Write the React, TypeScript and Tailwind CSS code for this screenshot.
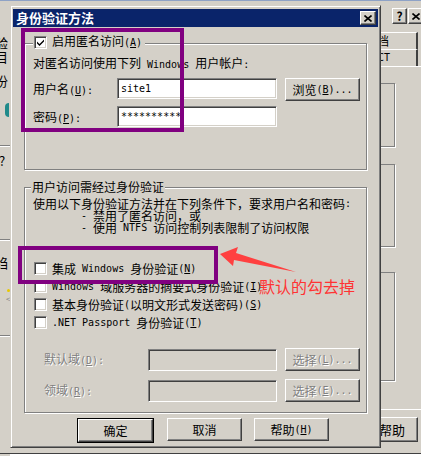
import React from "react";

type Kids = { children?: React.ReactNode };

// SimSun-like latin: half width mono
function Lat({children}: Kids) {
    return <span className="whitespace-pre font-['DejaVu_Sans_Mono',monospace] text-[10px]">{children}</span>
}

function Key({k, tail = ""}: { k: string, tail?: string }) {
    return <Lat>(<span className="underline">{k}</span>){tail}</Lat>
}

function CheckBox({checked}: { checked?: boolean }) {
    return (
        <span className="flex h-[13px] w-[13px] shrink-0 items-center justify-center border border-t-[#808080] border-l-[#808080] border-r-white border-b-white bg-white shadow-[inset_1px_1px_0_#404040,inset_-1px_-1px_0_#d4d0c8]">
            {checked && (
                <svg width="7" height="7" viewBox="0 0 7 7">
                    <polygon points="0,2.5 2.5,5 7,0.5 7,2.5 2.5,7 0,4.5" fill="#000"/>
                </svg>
            )}
        </span>
    )
}

function Field({w, h = 21, disabled, children}: Kids & { w: number, h?: number, disabled?: boolean }) {
    return (
        <div style={{width: w, height: h}}
             className={"flex shrink-0 items-center border border-t-[#808080] border-l-[#808080] border-r-white border-b-white px-[3px] shadow-[inset_1px_1px_0_#404040,inset_-1px_-1px_0_#d4d0c8] " + (disabled ? "bg-[#d4d0c8]" : "bg-white")}>
            {children}
        </div>
    )
}

function Btn({w, h = 23, disabled, children}: Kids & { w: number, h?: number, disabled?: boolean }) {
    return (
        <div style={{width: w, height: h}}
             className={"flex shrink-0 items-center justify-center border border-t-white border-l-white border-r-[#404040] border-b-[#404040] bg-[#d4d0c8] shadow-[inset_-1px_-1px_0_#808080] " + (disabled ? "text-[#808080] [text-shadow:1px_1px_0_#fff]" : "")}>
            {children}
        </div>
    )
}

function CloseGlyph() {
    return (
        <svg width="8" height="7" viewBox="0 0 8 7">
            <path d="M0.5 0.5 L7.5 6.5 M7.5 0.5 L0.5 6.5" stroke="#000" strokeWidth="1.6"/>
        </svg>
    )
}

function BackWindow() {
    return (
        <div className="absolute inset-0">
            <div className="h-[1px] bg-[#8ea2c6]"/>
            <div className="flex h-[26px] items-start justify-end bg-[#d4d0c8] pt-[7px]">
                <div className="mr-[1px]"><Btn w={15} h={16}><span className="font-bold text-[12px] leading-none">?</span></Btn></div>
                <div className="mr-[-3px]"><Btn w={16} h={16}><CloseGlyph/></Btn></div>
            </div>
            {/* left side of the window behind */}
            <div className="absolute left-[-5px] top-[36px] flex w-[15px] flex-col text-[13px] leading-[13px]">
                <span>验</span>
                <span className="mt-[1px]">目</span>
                <span className="mt-[11px]">份</span>
                <span className="mt-[16px] ml-[10px] h-[14px] w-[4px] rounded-l-full bg-[#1f8a8a]"/>
                <span className="mt-[28px] h-[1px] w-[20px] bg-[#808080] shadow-[0_1px_0_#fff]"/>
                <span className="mt-[8px] ml-[4px]">?</span>
                <span className="mt-[72px] h-[1px] w-[20px] bg-[#808080] shadow-[0_1px_0_#fff]"/>
                <span className="mt-[16px]">绉</span>
                <span className="mt-[20px] ml-[12px] h-[3px] w-[3px] rounded-full bg-[#e8c800]"/>
                <span className="ml-[11px] text-[8px] text-[#808080]">&lt;</span>
                <span className="mt-[30px] h-[1px] w-[20px] bg-[#808080] shadow-[0_1px_0_#fff]"/>
            </div>
            {/* right side of the window behind */}
            <div className="absolute left-[380px] top-[32px] flex w-[41px] flex-col">
                <div className="flex h-[17px] w-[38px] items-center border-t border-t-white border-r-2 border-r-[#404040] text-[12px]">
                    <span className="ml-[-3px]">档</span>
                </div>
                <div className="flex h-[17px] w-[38px] items-center border-t border-t-white border-r-2 border-r-[#404040]">
                    <Lat><span className="ml-[-2px]">CT</span></Lat>
                </div>
                <div className="h-[1px] bg-white"/>
                <div className="mt-[16px] h-[64px] w-[15px] border-y border-r border-[#808080] shadow-[1px_1px_0_#fff]"/>
                <div className="mt-[17px] h-[83px] w-[15px] border-y border-r border-[#808080] shadow-[1px_1px_0_#fff]"/>
                <div className="mt-[25px] h-[109px] w-[15px] border-y border-r border-[#808080] shadow-[1px_1px_0_#fff]"/>
                <div className="mt-[28px] h-[1px] w-[41px] bg-white"/>
                <div className="mt-[7px]">
                    <Btn w={38} h={25}><span className="ml-[-14px] text-[13px]">帮助</span></Btn>
                </div>
            </div>
            <div className="absolute bottom-[2px] left-0 h-[1px] w-[421px] bg-[#404040]"/>
            <div className="absolute bottom-0 left-[10px] h-[2px] w-[411px] bg-white"/>
        </div>
    )
}

function AuthDialog() {
    return (
        <div className="absolute left-[10px] top-[5px] flex h-[443px] w-[371px] flex-col border border-t-[#d4d0c8] border-l-[#d4d0c8] border-r-[#404040] border-b-[#404040] bg-[#d4d0c8] px-[2px] pt-[3px] shadow-[inset_1px_1px_0_#fff,inset_-1px_-1px_0_#808080]">
            <div className="flex h-[18px] shrink-0 items-center justify-between bg-[#0a246a] pl-[3px] pr-[2px]">
                <span className="text-[13px] font-bold leading-[14px] text-white">身份验证方法</span>
                <Btn w={16} h={14}><CloseGlyph/></Btn>
            </div>

            <div className="flex flex-col pl-[11px]">
                {/* anonymous access */}
                <div className="relative mt-[16px] h-[127px] w-[343px] border border-[#808080] pl-[8px] pt-[12px] shadow-[1px_1px_0_#fff,inset_1px_1px_0_#fff]">
                    <div className="absolute left-[8px] top-[-9px] flex h-[14px] items-center gap-[5px] bg-[#d4d0c8] px-[1px]">
                        <CheckBox checked/>
                        <span className="pr-[2px]">启用匿名访问<Key k="A"/></span>
                    </div>
                    <div className="h-[14px]">对匿名访问使用下列<Lat> Windows </Lat>用户帐户<Lat>:</Lat></div>
                    <div className="mt-[8px] flex items-start">
                        <span className="w-[84px] leading-[21px]">用户名<Key k="U" tail=":"/></span>
                        <Field w={160}><Lat>site1</Lat></Field>
                        <div className="ml-[8px]"><Btn w={75}>浏览<Key k="B" tail="..."/></Btn></div>
                    </div>
                    <div className="mt-[5px] flex items-start">
                        <span className="w-[84px] leading-[21px]">密码<Key k="P" tail=":"/></span>
                        <Field w={160}><Lat>**********</Lat></Field>
                    </div>
                </div>

                {/* authenticated access */}
                <div className="relative mt-[17px] h-[226px] w-[343px] border border-[#808080] pl-[8px] pt-[10px] shadow-[1px_1px_0_#fff,inset_1px_1px_0_#fff]">
                    <div className="absolute left-[6px] top-[-8px] bg-[#d4d0c8] px-[1px] leading-[14px]">
                        用户访问需经过身份验证
                    </div>
                    <div className="flex flex-col">
                        <div className="flex h-[12px] items-center">使用以下身份验证方法并在下列条件下，要求用户名和密码<Lat>:</Lat></div>
                        <div className="flex h-[12px] items-center pl-[48px]"><Lat>- </Lat>禁用了匿名访问，或</div>
                        <div className="flex h-[12px] items-center pl-[48px]"><Lat>- </Lat>使用<Lat> NTFS </Lat>访问控制列表限制了访问权限</div>
                    </div>
                    <div className="ml-[1px] mt-[28px] flex flex-col gap-[5px]">
                        <div className="flex h-[13px] items-center gap-[5px]">
                            <CheckBox/>
                            <span className="flex items-center">集成<Lat> Windows </Lat>身份验证<Key k="N"/></span>
                        </div>
                        <div className="flex h-[13px] items-center gap-[5px]">
                            <CheckBox/>
                            <span className="flex items-center"><Lat>Windows </Lat>域服务器的摘要式身份验证<Key k="I"/></span>
                        </div>
                        <div className="flex h-[13px] items-center gap-[5px]">
                            <CheckBox/>
                            <span className="flex items-center">基本身份验证<Lat>(</Lat>以明文形式发送密码<Lat>)</Lat><Key k="S"/></span>
                        </div>
                        <div className="flex h-[13px] items-center gap-[5px]">
                            <CheckBox/>
                            <span className="flex items-center"><Lat>.NET Passport </Lat>身份验证<Key k="T"/></span>
                        </div>
                    </div>
                    <div className="mt-[19px] flex items-center">
                        <span className="w-[115px] pl-[11px] text-[#808080] [text-shadow:1px_1px_0_#fff]">默认域<Key k="D" tail=":"/></span>
                        <Field w={129} h={22} disabled/>
                        <div className="ml-[8px]"><Btn w={75} disabled>选择<Key k="L" tail="..."/></Btn></div>
                    </div>
                    <div className="mt-[8px] flex items-center">
                        <span className="w-[115px] pl-[11px] text-[#808080] [text-shadow:1px_1px_0_#fff]">领域<Key k="R" tail=":"/></span>
                        <Field w={129} h={22} disabled/>
                        <div className="ml-[8px]"><Btn w={75} disabled>选择<Key k="E" tail="..."/></Btn></div>
                    </div>
                </div>
            </div>

            <div className="mt-[5px] flex pl-[64px]">
                <div className="border border-black">
                    <Btn w={75} h={23}>确定</Btn>
                </div>
                <div className="ml-[13px]"><Btn w={75}>取消</Btn></div>
                <div className="ml-[12px]"><Btn w={75}>帮助<Key k="H"/></Btn></div>
            </div>
        </div>
    )
}

function Annotations() {
    return (
        <>
            <div className="pointer-events-none absolute left-[21px] top-[28px] h-[104px] w-[163px] border-4 border-[#800080]"/>
            <div className="pointer-events-none absolute left-[18px] top-[246px] h-[38px] w-[200px] border-[4px] border-[#800080]"/>
            <svg className="pointer-events-none absolute left-0 top-0" width="421" height="456">
                <polygon points="220,254 238,247 236,253 296,272 234,260 233,266" fill="#ff4040"/>
            </svg>
            <div className="absolute left-[259px] top-[276px] text-[16px] leading-[20px] text-[#ff3333]">默认的勾去掉</div>
        </>
    )
}

export default function App() {
    return (
        <div className="relative h-[456px] w-[421px] overflow-hidden bg-[#d4d0c8] font-['Noto_Sans_CJK_SC',sans-serif] text-[12px] leading-[14px] text-black">
            <BackWindow/>
            <AuthDialog/>
            <Annotations/>
        </div>
    )
}
